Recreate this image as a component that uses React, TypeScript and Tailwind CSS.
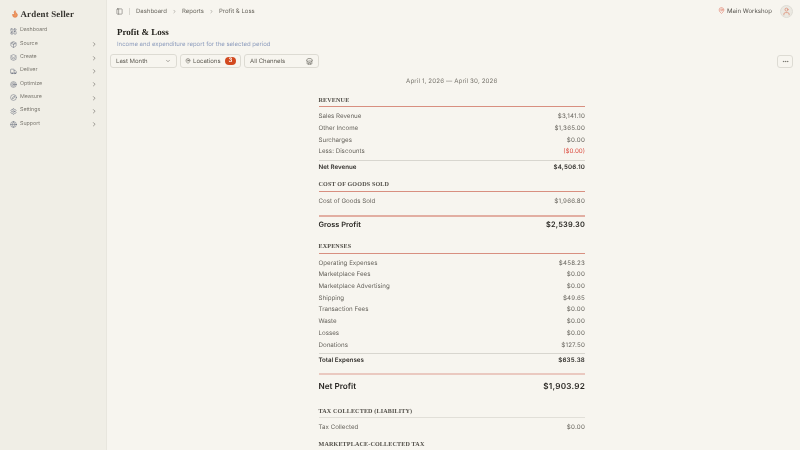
import React from "react";
import { ChevronRight, ChevronDown, LayoutDashboard, Package, Layers, Truck, Target, Compass, Settings, Globe, PanelLeft, MapPin, Store, User, MoreHorizontal, Flame } from "lucide-react";

const inter = "font-['Inter',sans-serif]";
const serif = "font-['Liberation_Serif',serif]";

const nav = [
  { label: "Dashboard", Icon: LayoutDashboard, chevron: false },
  { label: "Source", Icon: Package, chevron: true },
  { label: "Create", Icon: Layers, chevron: true },
  { label: "Deliver", Icon: Truck, chevron: true },
  { label: "Optimize", Icon: Target, chevron: true },
  { label: "Measure", Icon: Compass, chevron: true },
  { label: "Settings", Icon: Settings, chevron: true },
  { label: "Support", Icon: Globe, chevron: true },
];

function Row({ label, value, red }: { label: string; value: string; red?: boolean }) {
  return (
    <div className="flex h-[11.73px] items-center justify-between text-[6.2px] text-[#66635c]">
      <span>{label}</span>
      <span className={red ? "text-[#dc4f43]" : "tracking-[0.2px]"}>{value}</span>
    </div>
  );
}

function Heading({ children, strong = true }: { children: React.ReactNode; strong?: boolean }) {
  return (
    <div className={`${serif} text-[6.1px] leading-[9px] font-bold tracking-[0.15px] text-[#504d47] pb-[0.5px] border-b ${strong ? "border-[#d88f80]" : "border-[#e1dfd8]"}`}>
      {children}
    </div>
  );
}

function Total({ label, value }: { label: string; value: string }) {
  return (
    <div className="flex h-[15px] items-center justify-between border-t border-[#d8d6cf] text-[6.2px] font-semibold text-[#33312d] mt-[2px]">
      <span>{label}</span>
      <span className="tracking-[0.2px]">{value}</span>
    </div>
  );
}

function Big({ label, value, cls, pale }: { label: string; value: string; cls: string; pale?: boolean }) {
  return (
    <div className={`flex items-center justify-between border-t-2 ${pale ? "border-[#eac9c0]" : "border-[#e2aea2]"} font-semibold text-[#2b2925] ${cls}`}>
      <span>{label}</span>
      <span className="tracking-[0.2px]">{value}</span>
    </div>
  );
}

export default function App() {
  return (
    <div className={`${inter} [text-rendering:geometricPrecision] flex h-[450px] w-[800px] overflow-hidden bg-[#f7f5ef]`}>
      <aside className="w-[107px] shrink-0 bg-[#f0eee6] border-r border-[#e8e6de]">
        <div className="flex flex-col will-change-transform">
          <div className="flex h-[23px] shrink-0 items-center gap-[2px] pl-[10.5px] pt-[5px]">
            <Flame size={8} className="text-[#e2703a] fill-[#ec9a62]" />
            <span className={`${serif} text-[8.9px] font-bold tracking-[0.2px] text-[#35332e] leading-[13px]`}>Ardent Seller</span>
          </div>
          <nav className="flex flex-col pt-[1.5px]">
            {nav.map(({ label, Icon, chevron }) => (
              <div key={label} className="flex h-[13.35px] shrink-0 items-center pl-[10px] pr-[9px] text-[5.3px] text-[#7a776f]">
                <Icon size={7} strokeWidth={1.6} className="text-[#5d6475] mr-[3px]" />
                <span>{label}</span>
                {chevron && <ChevronRight size={6.5} strokeWidth={2} className="ml-auto text-[#55524c]" />}
              </div>
            ))}
          </nav>
        </div>
      </aside>
      <main className="flex-1 min-w-0 flex flex-col will-change-transform">
        <header className="flex h-[23px] shrink-0 items-center pl-[9px] pr-[7px] text-[6px] text-[#6b6860]">
          <PanelLeft size={7} strokeWidth={1.5} className="text-[#44423d]" />
          <span className="mx-[6px] h-[7px] w-px bg-[#d8d6cf]" />
          <span>Dashboard</span>
          <ChevronRight size={5} className="mx-[5px]" />
          <span>Reports</span>
          <ChevronRight size={5} className="mx-[5px]" />
          <span>Profit &amp; Loss</span>
          <MapPin size={7} strokeWidth={2} className="ml-auto text-[#e07a66] mr-[2px] -translate-y-[1px]" />
          <span className="text-[#55524c] text-[6.1px] mr-[8px]">Main Workshop</span>
          <span className="flex size-[13px] items-center justify-center rounded-full border border-[#dedcd5] bg-[#ebe9e2]">
            <User size={9} strokeWidth={2} className="text-[#dc8a72]" />
          </span>
        </header>
        <div className="shrink-0 pl-[10px] pt-[3px]">
          <h1 className={`${serif} text-[9px] font-bold leading-[13px] text-[#26241f]`}>Profit &amp; Loss</h1>
          <p className="text-[6px] leading-[9px] mt-[1px] text-[#8e9dbd]">Income and expenditure report for the selected period</p>
        </div>
        <div className="flex shrink-0 items-center gap-[3px] pl-[3px] pr-[7px] pt-[5px] text-[6px] text-[#5c5951]">
          <div className="flex h-[14px] w-[67px] items-center justify-between rounded-[3px] border border-[#dddbd3] px-[5px]">
            Last Month <ChevronDown size={6} />
          </div>
          <div className="flex h-[14px] w-[61px] items-center rounded-[3px] border border-[#dddbd3] px-[4px]">
            <MapPin size={6} className="mr-[2px]" />Locations
            <span className="ml-auto flex h-[8px] w-[11px] items-center justify-center rounded-full bg-[#d2491f] text-[6px] font-semibold leading-none text-white">3</span>
          </div>
          <div className="flex h-[14px] w-[75px] items-center justify-between rounded-[3px] border border-[#dddbd3] px-[5px]">
            All Channels <Store size={7} />
          </div>
          <div className="ml-auto flex h-[13px] w-[16px] items-center justify-center rounded-[3px] border border-[#dddbd3]">
            <MoreHorizontal size={7} />
          </div>
        </div>
        <section className="w-[266.5px] shrink-0 ml-[211.5px] mt-[8.5px]">
          <div className="text-center text-[6.2px] leading-[9px] text-[#77746c] tracking-[0.12px]">April 1, 2026 — April 30, 2026</div>
          <div className="mt-[11px]"><Heading>REVENUE</Heading></div>
          <div className="pt-[4px]">
            <Row label="Sales Revenue" value="$3,141.10" />
            <Row label="Other Income" value="$1,365.00" />
            <Row label="Surcharges" value="$0.00" />
            <Row label="Less: Discounts" value="($0.00)" red />
            <Total label="Net Revenue" value="$4,506.10" />
          </div>
          <div className="mt-[6.5px]"><Heading>COST OF GOODS SOLD</Heading></div>
          <div className="pt-[4px]"><Row label="Cost of Goods Sold" value="$1,966.80" /></div>
          <div className="mt-[7px]"><Big label="Gross Profit" value="$2,539.30" cls="h-[18px] text-[7.4px]" /></div>
          <div className="mt-[10.8px]"><Heading>EXPENSES</Heading></div>
          <div className="pt-[3.5px]">
            <Row label="Operating Expenses" value="$458.23" />
            <Row label="Marketplace Fees" value="$0.00" />
            <Row label="Marketplace Advertising" value="$0.00" />
            <Row label="Shipping" value="$49.65" />
            <Row label="Transaction Fees" value="$0.00" />
            <Row label="Waste" value="$0.00" />
            <Row label="Losses" value="$0.00" />
            <Row label="Donations" value="$127.50" />
            <Total label="Total Expenses" value="$635.38" />
          </div>
          <div className="mt-[5px]"><Big label="Net Profit" value="$1,903.92" cls="h-[25px] text-[8.2px]" pale /></div>
          <div className="mt-[9.5px]"><Heading strong={false}>TAX COLLECTED (LIABILITY)</Heading></div>
          <div className="pt-[3.5px]"><Row label="Tax Collected" value="$0.00" /></div>
          <div className="mt-[8px]"><Heading strong={false}>MARKETPLACE-COLLECTED TAX</Heading></div>
        </section>
      </main>
    </div>
  );
}
